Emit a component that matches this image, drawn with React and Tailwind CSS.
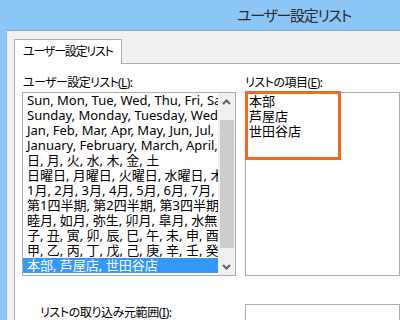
const items = [
  "Sun, Mon, Tue, Wed, Thu, Fri, Sat",
  "Sunday, Monday, Tuesday, Wednesday, Thursday, Friday, Saturday",
  "Jan, Feb, Mar, Apr, May, Jun, Jul, Aug, Sep, Oct, Nov, Dec",
  "January, February, March, April, May, June, July, August",
  "日, 月, 火, 水, 木, 金, 土",
  "日曜日, 月曜日, 火曜日, 水曜日, 木曜日, 金曜日, 土曜日",
  "1月, 2月, 3月, 4月, 5月, 6月, 7月, 8月, 9月",
  "第1四半期, 第2四半期, 第3四半期, 第4四半期",
  "睦月, 如月, 弥生, 卯月, 皐月, 水無月, 文月, 葉月",
  "子, 丑, 寅, 卯, 辰, 巳, 午, 未, 申, 酉, 戌, 亥",
  "甲, 乙, 丙, 丁, 戊, 己, 庚, 辛, 壬, 癸",
  "本部, 芦屋店, 世田谷店",
];

function Chevron({ up }) {
  return (
    <svg width="9" height="6" viewBox="0 0 9 6">
      <path
        d={up ? "M1 5 L4.5 1.5 L8 5" : "M1 1 L4.5 4.5 L8 1"}
        fill="none"
        stroke="#606060"
        strokeWidth="2"
      />
    </svg>
  );
}

export default function App() {
  return (
    <div className="w-[400px] h-[320px] overflow-hidden bg-[#8cc6f7] flex flex-col font-['Noto_Sans','Noto_Sans_CJK_JP',sans-serif] text-[12px] text-black [font-feature-settings:'palt']">
      {/* Title bar */}
      <div className="h-[30px] shrink-0 flex items-center pl-[237px] text-[15px] text-[#2b2b2b] whitespace-nowrap tracking-[-1.3px]">
        ユーザー設定リスト
      </div>

      <div className="flex-1 flex pl-[7px]">
        <div className="flex-1 flex flex-col bg-[#f0f0f0] border-t border-[#7fa9d1] pt-[8px] pl-[7px]">
          {/* Tab */}
          <div className="relative z-10 -mb-px w-[108px] h-[25px] bg-white border border-b-0 border-[#adadad] flex items-center pl-[8px] whitespace-nowrap tracking-[-1.2px]">
            ユーザー設定リスト
          </div>

          {/* Tab panel */}
          <div className="flex-1 bg-white border-t border-l border-[#adadad] pl-[7px] pt-[11px]">
            <div className="flex gap-[9px]">
              {/* Left column */}
              <div className="w-[214px] shrink-0 flex flex-col">
                <div className="h-[17px] leading-[15px] pl-[1px] whitespace-nowrap tracking-[-0.6px]">
                  ユーザー設定リスト(<span className="underline">L</span>):
                </div>
                <div className="h-[184px] border border-[#adadad] flex">
                  <div className="flex-1 min-w-0 overflow-hidden text-[13px]">
                    {items.map((t, i) => (
                      <div
                        key={i}
                        className={`h-[15px] leading-[15px] whitespace-nowrap overflow-hidden pl-[4px] ${
                          i === items.length - 1 ? "bg-[#3399ff] text-white" : ""
                        }`}
                      >
                        {t}
                      </div>
                    ))}
                  </div>
                  <div className="w-[17px] shrink-0 bg-[#f0f0f0] flex flex-col items-center">
                    <div className="h-[17px] w-full flex items-center justify-center">
                      <Chevron up />
                    </div>
                    <div className="flex-1 w-[14px] my-[10px] bg-[#cdcdcd]" />
                    <div className="h-[17px] w-full flex items-center justify-center">
                      <Chevron />
                    </div>
                  </div>
                </div>
              </div>

              {/* Right column */}
              <div className="flex-1 flex flex-col">
                <div className="h-[17px] leading-[15px] whitespace-nowrap tracking-[-0.5px]">
                  リストの項目(<span className="underline">E</span>):
                </div>
                <div className="relative h-[184px] border border-[#adadad] pl-[3px] pt-px text-[13px]">
                  <div className="leading-[15px]">本部</div>
                  <div className="leading-[15px]">芦屋店</div>
                  <div className="leading-[15px]">世田谷店</div>
                  <div className="absolute -left-px -top-[2px] w-[96px] h-[69px] border-[3px] border-[#f26a21]" />
                </div>
              </div>
            </div>

            {/* Import range row */}
            <div className="flex mt-[28px]">
              <div className="w-[223px] shrink-0 pl-[18px] pt-[1px] leading-[15px] whitespace-nowrap tracking-[-0.4px]">
                リストの取り込み元範囲(<span className="underline">I</span>):
              </div>
              <div className="flex-1 h-[24px] border border-[#adadad]" />
            </div>
          </div>
        </div>
      </div>
    </div>
  );
}
